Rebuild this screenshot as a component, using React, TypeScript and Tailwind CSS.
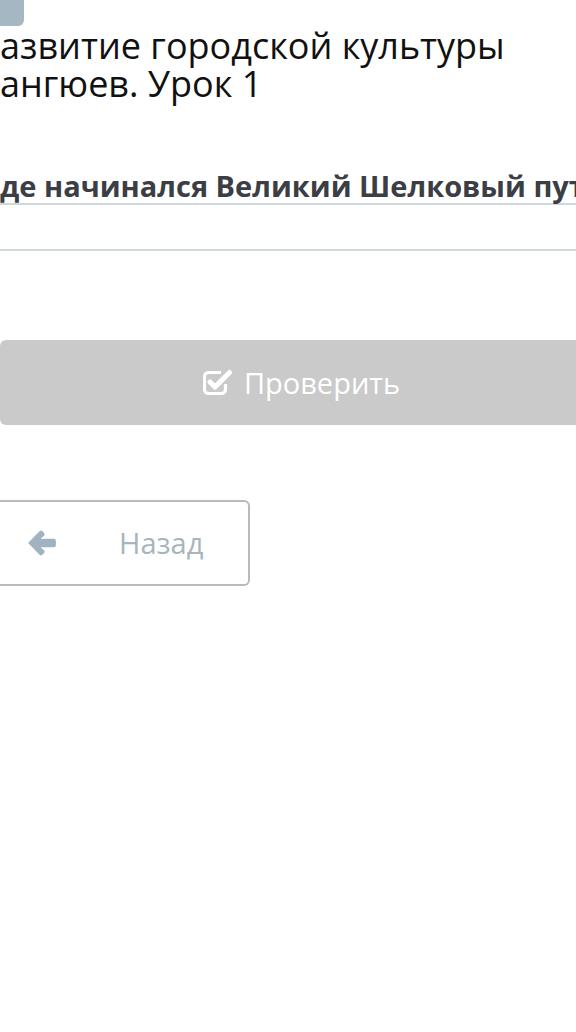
export default function App() {
  return (
    <div className="w-[576px] h-[1032px] overflow-hidden bg-white font-['Open_Sans',sans-serif]">
      {/* Top badge, cut by the frame */}
      <div className="w-[24px] h-[26px] bg-[#a4b7c3] rounded-br-[6px]" />

      {/* Lesson title */}
      <h1 className="mt-[1px] text-[36px] leading-[38px] text-[#111] font-normal whitespace-nowrap">
        <div>азвитие городской культуры</div>
        <div>ангюев. Урок 1</div>
      </h1>

      {/* Question */}
      <div className="mt-[66px] whitespace-nowrap">
        <p className="text-[29px] leading-[34px] font-bold text-[#3b3e44] border-b-2 border-[#cfd8dc]">
          де начинался Великий Шелковый путь?
        </p>
        <div className="h-[46px] border-b-2 border-[#cfd8dc]" />
      </div>

      {/* Check button */}
      <div className="mt-[89px] h-[85px] bg-[#cacaca] rounded-l-[6px] flex items-center justify-center gap-[11px] text-white pl-[27px]">
        <svg viewBox="0 0 30 28" className="w-[30px] h-[28px] shrink-0" fill="none">
          <path d="M22.5 15v5.5a4 4 0 0 1-4 4h-13a4 4 0 0 1-4-4v-13a4 4 0 0 1 4-4H18" stroke="currentColor" strokeWidth="3.2" />
          <path d="M7 13l5 5L26.5 3.5" stroke="currentColor" strokeWidth="5" strokeLinecap="round" strokeLinejoin="round" />
        </svg>
        <span className="text-[29px] leading-none">Проверить</span>
      </div>

      {/* Back button */}
      <div className="mt-[75px] w-[250px] h-[86px] border-2 border-l-0 border-[#b4bcc0] rounded-r-[6px] flex items-center">
        <svg viewBox="0 0 28 26" className="ml-[27px] w-[30px] h-[28px] shrink-0 text-[#9fb3c1]" fill="currentColor">
          <path d="M1 13L11.5 2.2a2.2 2.2 0 0 1 3.1 0l1.2 1.2a2.2 2.2 0 0 1 0 3.1L12.5 9h12.3a2.2 2.2 0 0 1 2.2 2.2v3.6a2.2 2.2 0 0 1-2.2 2.2H12.5l3.3 2.5a2.2 2.2 0 0 1 0 3.1l-1.2 1.2a2.2 2.2 0 0 1-3.1 0z" />
        </svg>
        <span className="ml-[62px] text-[29px] text-[#a7b5bd]">Назад</span>
      </div>
    </div>
  );
}
